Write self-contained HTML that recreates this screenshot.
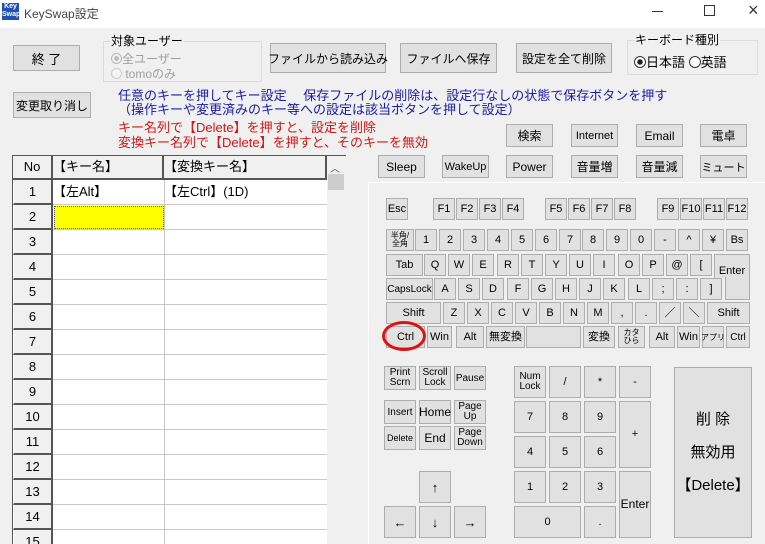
<!DOCTYPE html>
<html><head><meta charset="utf-8"><style>
*{margin:0;padding:0;box-sizing:border-box}
html,body{width:765px;height:544px;overflow:hidden}
body{background:#f0f0f0;position:relative;font-family:"Liberation Sans","Noto Sans CJK JP",sans-serif;font-size:12px;color:#000}
.a{position:absolute}
.b{position:absolute;background:#e1e1e1;border:1px solid #adadad;display:flex;align-items:center;justify-content:center;font-size:12px;white-space:nowrap}
.k{position:absolute;background:#e1e1e1;border:1px solid #adadad;display:flex;align-items:center;justify-content:center;font-size:11px;line-height:11px;text-align:center;white-space:nowrap;width:22px;height:22px}
.g{position:absolute;border:1px solid #dcdcdc}
.gl{position:absolute;background:#f0f0f0;padding:0 1px;font-size:12px;top:-9px;left:6px;line-height:16px}
.t{position:absolute;white-space:nowrap;font-size:13px;line-height:15px}
.rh{position:absolute;left:13px;width:40px;height:25px;background:#f0f0f0;border-right:2px solid #555;border-bottom:2px solid #555;border-left:1px solid #fff;text-align:center;font-size:13px;line-height:23px}
</style></head><body>
<div class="a" style="left:0;top:0;width:765px;height:28px;background:#fff"></div>
<div class="a" style="left:2px;top:3px;width:17px;height:17px;background:#2050b0;color:#fff;font-size:7px;line-height:8px;font-weight:bold;text-align:center">Key<br>Swap</div>
<div class="a" style="left:24px;top:5px;font-size:12px;color:#444">KeySwap設定</div>
<div class="a" style="left:652px;top:11px;width:11px;height:1px;background:#333"></div>
<div class="a" style="left:704px;top:5px;width:11px;height:11px;border:1px solid #333"></div>
<div class="a" style="left:748px;top:0px;font-size:18px;color:#333">×</div>

<div class="b" style="left:13px;top:45px;width:67px;height:26px;font-size:13px">終 了</div>
<div class="b" style="left:13px;top:92px;width:78px;height:26px">変更取り消し</div>
<div class="g" style="left:103px;top:41px;width:159px;height:41px"><span class="gl">対象ユーザー</span>
<div class="a" style="left:7px;top:8px;color:#a0a0a0;font-size:12px"><span style="display:inline-block;width:11px;height:11px;border-radius:50%;border:1px solid #bbb;background:radial-gradient(#bbb 35%,#f0f0f0 40%);vertical-align:-1px"></span>全ユーザー</div>
<div class="a" style="left:7px;top:23px;color:#a0a0a0;font-size:12px"><span style="display:inline-block;width:11px;height:11px;border-radius:50%;border:1px solid #ccc;background:#f4f4f4;vertical-align:-1px"></span> tomoのみ</div></div>
<div class="b" style="left:270px;top:43px;width:116px;height:30px">ファイルから読み込み</div>
<div class="b" style="left:400px;top:43px;width:97px;height:30px">ファイルへ保存</div>
<div class="b" style="left:516px;top:43px;width:96px;height:30px">設定を全て削除</div>
<div class="g" style="left:627px;top:40px;width:131px;height:35px"><span class="gl">キーボード種別</span>
<div class="a" style="left:6px;top:11px;font-size:13px"><span style="display:inline-block;width:12px;height:12px;border-radius:50%;border:1px solid #333;background:radial-gradient(#222 35%,#fff 42%);vertical-align:-1px"></span>日本語 <span style="display:inline-block;width:12px;height:12px;border-radius:50%;border:1px solid #333;background:#fff;vertical-align:-1px"></span>英語</div></div>

<div class="t" style="left:118px;top:88px;color:#1a1aa8">任意のキーを押してキー設定　 保存ファイルの削除は、設定行なしの状態で保存ボタンを押す</div>
<div class="t" style="left:118px;top:102px;color:#1a1aa8">（操作キーや変更済みのキー等への設定は該当ボタンを押して設定）</div>
<div class="t" style="left:118px;top:120px;color:#d01818">キー名列で【Delete】を押すと、設定を削除</div>
<div class="t" style="left:118px;top:135px;color:#d01818">変換キー名列で【Delete】を押すと、そのキーを無効</div>

<div class="b" style="left:506px;top:124px;width:47px;height:23px">検索</div>
<div class="b" style="left:571px;top:124px;width:47px;height:23px;font-size:11px">Internet</div>
<div class="b" style="left:636px;top:124px;width:47px;height:23px">Email</div>
<div class="b" style="left:700px;top:124px;width:47px;height:23px">電卓</div>
<div class="b" style="left:378px;top:155px;width:47px;height:23px">Sleep</div>
<div class="b" style="left:442px;top:155px;width:47px;height:23px;font-size:11px">WakeUp</div>
<div class="b" style="left:506px;top:155px;width:47px;height:23px">Power</div>
<div class="b" style="left:571px;top:155px;width:47px;height:23px">音量増</div>
<div class="b" style="left:636px;top:155px;width:47px;height:23px">音量減</div>
<div class="b" style="left:700px;top:155px;width:47px;height:23px;font-size:11px">ミュート</div>

<div class="a" style="left:12px;top:155px;width:334px;height:389px;background:#fff;border-left:1px solid #555;border-top:1px solid #555"></div>
<div class="a" style="left:13px;top:156px;width:314px;height:24px;background:#f0f0f0;border-bottom:2px solid #555"></div>
<div class="a" style="left:13px;top:156px;width:40px;height:24px;border-right:2px solid #555;text-align:center;font-size:13px;line-height:22px">No</div>
<div class="a" style="left:53px;top:156px;width:111px;height:24px;border-right:2px solid #555;font-size:13px;line-height:22px">【キー名】</div>
<div class="a" style="left:164px;top:156px;width:163px;height:24px;border-right:2px solid #555;font-size:13px;line-height:22px">【変換キー名】</div>
<div class="a" style="left:327px;top:156px;width:19px;height:388px;background:#f0f0f0"></div>
<div class="a" style="left:330px;top:160px;font-size:10px;color:#555">︿</div>
<div class="a" style="left:328px;top:174px;width:16px;height:16px;background:#cdcdcd"></div>

<div class="rh" style="top:180px">1</div><div class="rh" style="top:205px">2</div><div class="rh" style="top:230px">3</div><div class="rh" style="top:255px">4</div><div class="rh" style="top:280px">5</div><div class="rh" style="top:305px">6</div><div class="rh" style="top:330px">7</div><div class="rh" style="top:355px">8</div><div class="rh" style="top:380px">9</div><div class="rh" style="top:405px">10</div><div class="rh" style="top:430px">11</div><div class="rh" style="top:455px">12</div><div class="rh" style="top:480px">13</div><div class="rh" style="top:505px">14</div><div class="rh" style="top:530px">15</div>
<div class="a" style="left:53px;top:180px;width:274px;height:364px;background:repeating-linear-gradient(to bottom,transparent 0 24px,#c8c8c8 24px 25px)"></div>
<div class="a" style="left:164px;top:180px;width:1px;height:364px;background:#c8c8c8"></div>
<div class="a" style="left:53px;top:180px;font-size:13px;line-height:24px">【左Alt】</div>
<div class="a" style="left:164px;top:180px;font-size:13px;line-height:24px">【左Ctrl】(1D)</div>
<div class="a" style="left:54px;top:206px;width:110px;height:23px;background:#ffff00;border:1px dotted #555"></div>

<div class="a" style="left:368px;top:182px;width:397px;height:362px;border-left:1px solid #fff;border-top:1px solid #fff"></div>
<div class="k" style="left:386px;top:198px">Esc</div>
<div class="k" style="left:433px;top:198px">F1</div><div class="k" style="left:456px;top:198px">F2</div><div class="k" style="left:479px;top:198px">F3</div><div class="k" style="left:502px;top:198px">F4</div>
<div class="k" style="left:545px;top:198px">F5</div><div class="k" style="left:568px;top:198px">F6</div><div class="k" style="left:591px;top:198px">F7</div><div class="k" style="left:614px;top:198px">F8</div>
<div class="k" style="left:657px;top:198px">F9</div><div class="k" style="left:680px;top:198px">F10</div><div class="k" style="left:703px;top:198px">F11</div><div class="k" style="left:726px;top:198px">F12</div>

<div class="k" style="left:386px;top:229px;width:28px;font-size:8px;line-height:8px">半角/<br>全角</div>
<div class="k" style="left:415px;top:229px">1</div><div class="k" style="left:439px;top:229px">2</div><div class="k" style="left:463px;top:229px">3</div><div class="k" style="left:487px;top:229px">4</div><div class="k" style="left:511px;top:229px">5</div><div class="k" style="left:535px;top:229px">6</div><div class="k" style="left:559px;top:229px">7</div><div class="k" style="left:582px;top:229px">8</div><div class="k" style="left:606px;top:229px">9</div><div class="k" style="left:630px;top:229px">0</div><div class="k" style="left:654px;top:229px">-</div><div class="k" style="left:678px;top:229px">^</div><div class="k" style="left:702px;top:229px">¥</div><div class="k" style="left:726px;top:229px">Bs</div>

<div class="k" style="left:386px;top:254px;width:37px">Tab</div>
<div class="k" style="left:424px;top:254px">Q</div><div class="k" style="left:448px;top:254px">W</div><div class="k" style="left:472px;top:254px">E</div><div class="k" style="left:497px;top:254px">R</div><div class="k" style="left:521px;top:254px">T</div><div class="k" style="left:545px;top:254px">Y</div><div class="k" style="left:569px;top:254px">U</div><div class="k" style="left:593px;top:254px">I</div><div class="k" style="left:618px;top:254px">O</div><div class="k" style="left:642px;top:254px">P</div><div class="k" style="left:666px;top:254px">@</div><div class="k" style="left:690px;top:254px">[</div>
<div class="k" style="left:714px;top:254px;width:36px;height:24px;border-bottom:none;padding-top:10px">Enter</div>
<div class="k" style="left:725px;top:277px;width:25px;height:23px;border-top:none"></div>

<div class="k" style="left:386px;top:278px;width:47px;font-size:10px">CapsLock</div>
<div class="k" style="left:434px;top:278px">A</div><div class="k" style="left:458px;top:278px">S</div><div class="k" style="left:482px;top:278px">D</div><div class="k" style="left:507px;top:278px">F</div><div class="k" style="left:531px;top:278px">G</div><div class="k" style="left:555px;top:278px">H</div><div class="k" style="left:579px;top:278px">J</div><div class="k" style="left:603px;top:278px">K</div><div class="k" style="left:628px;top:278px">L</div><div class="k" style="left:652px;top:278px">;</div><div class="k" style="left:676px;top:278px">:</div><div class="k" style="left:700px;top:278px">]</div>

<div class="k" style="left:386px;top:302px;width:55px">Shift</div>
<div class="k" style="left:443px;top:302px">Z</div><div class="k" style="left:467px;top:302px">X</div><div class="k" style="left:491px;top:302px">C</div><div class="k" style="left:515px;top:302px">V</div><div class="k" style="left:539px;top:302px">B</div><div class="k" style="left:563px;top:302px">N</div><div class="k" style="left:587px;top:302px">M</div><div class="k" style="left:611px;top:302px">,</div><div class="k" style="left:635px;top:302px">.</div><div class="k" style="left:659px;top:302px">／</div><div class="k" style="left:683px;top:302px">＼</div>
<div class="k" style="left:707px;top:302px;width:43px">Shift</div>

<div class="k" style="left:386px;top:326px;width:39px">Ctrl</div>
<div class="a" style="left:382px;top:321px;width:44px;height:30px;border:3px solid #e01010;border-radius:50%"></div>
<div class="k" style="left:427px;top:326px;width:25px">Win</div>
<div class="k" style="left:456px;top:326px;width:28px">Alt</div>
<div class="k" style="left:486px;top:326px;width:39px">無変換</div>
<div class="k" style="left:526px;top:326px;width:55px"></div>
<div class="k" style="left:583px;top:326px;width:32px">変換</div>
<div class="k" style="left:618px;top:326px;width:27px;font-size:8px;line-height:8px">カタ<br>ひら</div>
<div class="k" style="left:649px;top:326px;width:26px">Alt</div>
<div class="k" style="left:677px;top:326px;width:23px">Win</div>
<div class="k" style="left:702px;top:326px;width:22px;font-size:8px">アプリ</div>
<div class="k" style="left:726px;top:326px;width:24px;font-size:10px">Ctrl</div>

<div class="k" style="left:384px;top:366px;width:32px;height:24px;font-size:10px;line-height:10px">Print<br>Scrn</div>
<div class="k" style="left:419px;top:366px;width:32px;height:24px;font-size:10px;line-height:10px">Scroll<br>Lock</div>
<div class="k" style="left:454px;top:366px;width:32px;height:24px;font-size:10px">Pause</div>
<div class="k" style="left:384px;top:400px;width:32px;height:24px;font-size:10px">Insert</div>
<div class="k" style="left:419px;top:400px;width:32px;height:24px;font-size:12px">Home</div>
<div class="k" style="left:454px;top:400px;width:32px;height:24px;font-size:10px;line-height:10px">Page<br>Up</div>
<div class="k" style="left:384px;top:426px;width:32px;height:24px;font-size:9px">Delete</div>
<div class="k" style="left:419px;top:426px;width:32px;height:24px;font-size:12px">End</div>
<div class="k" style="left:454px;top:426px;width:32px;height:24px;font-size:10px;line-height:10px">Page<br>Down</div>
<div class="k" style="left:419px;top:471px;width:32px;height:32px;font-size:13px">↑</div>
<div class="k" style="left:384px;top:506px;width:32px;height:32px;font-size:13px">←</div>
<div class="k" style="left:419px;top:506px;width:32px;height:32px;font-size:13px">↓</div>
<div class="k" style="left:454px;top:506px;width:32px;height:32px;font-size:13px">→</div>

<div class="k" style="left:514px;top:366px;width:32px;height:32px;font-size:10px;line-height:10px">Num<br>Lock</div>
<div class="k" style="left:549px;top:366px;width:32px;height:32px">/</div>
<div class="k" style="left:584px;top:366px;width:32px;height:32px">*</div>
<div class="k" style="left:619px;top:366px;width:32px;height:32px">-</div>
<div class="k" style="left:514px;top:401px;width:32px;height:32px">7</div>
<div class="k" style="left:549px;top:401px;width:32px;height:32px">8</div>
<div class="k" style="left:584px;top:401px;width:32px;height:32px">9</div>
<div class="k" style="left:619px;top:401px;width:32px;height:67px">+</div>
<div class="k" style="left:514px;top:436px;width:32px;height:32px">4</div>
<div class="k" style="left:549px;top:436px;width:32px;height:32px">5</div>
<div class="k" style="left:584px;top:436px;width:32px;height:32px">6</div>
<div class="k" style="left:514px;top:471px;width:32px;height:32px">1</div>
<div class="k" style="left:549px;top:471px;width:32px;height:32px">2</div>
<div class="k" style="left:584px;top:471px;width:32px;height:32px">3</div>
<div class="k" style="left:619px;top:471px;width:32px;height:67px;font-size:12px">Enter</div>
<div class="k" style="left:514px;top:506px;width:67px;height:32px">0</div>
<div class="k" style="left:584px;top:506px;width:32px;height:32px">.</div>

<div class="k" style="left:674px;top:367px;width:78px;height:171px;font-size:15px;line-height:33px;flex-direction:column">削 除<br><span>無効用</span><span>【Delete】</span></div>
</body></html>
